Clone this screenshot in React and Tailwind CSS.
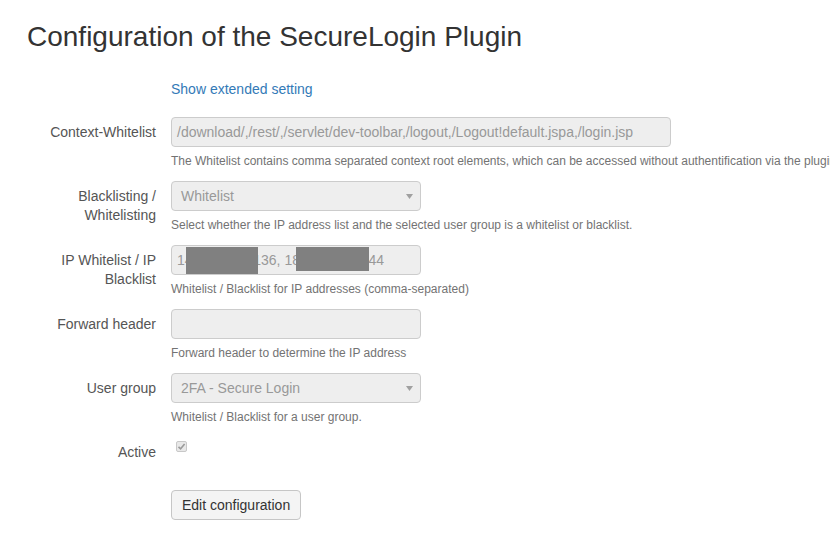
import React from "react";

const font = { fontFamily: '"Liberation Sans", Arial, sans-serif' };

function Arrow() {
  return (
    <svg width="7" height="5" viewBox="0 0 7 5" className="shrink-0">
      <path d="M0 0 L7 0 L3.5 5 Z" fill="#a0a0a0" />
    </svg>
  );
}

function Row({ label, children, help }) {
  return (
    <div className="flex mb-[11px]">
      <div className="w-[156px] shrink-0 text-right pt-[6px] text-[14px] leading-[19px] text-[#555]">
        {label}
      </div>
      <div className="ml-[15px] flex flex-col">
        {children}
        {help && (
          <div className="mt-[6px] text-[12px] leading-[17px] text-[#737373] whitespace-nowrap">
            {help}
          </div>
        )}
      </div>
    </div>
  );
}

function TextBox({ width, children }) {
  return (
    <div
      className={`relative h-[30px] ${width} bg-[#eeeeee] border border-[#cccccc] rounded-[4px] pl-[5px] flex items-center text-[14px] text-[#999999] whitespace-nowrap overflow-hidden`}
    >
      {children}
    </div>
  );
}

function SelectBox({ children }) {
  return (
    <div className="h-[30px] w-[250px] bg-[#eeeeee] border border-[#cccccc] rounded-[4px] pl-[9px] pr-[7px] flex items-center justify-between text-[14px] text-[#999999] whitespace-nowrap">
      <span>{children}</span>
      <Arrow />
    </div>
  );
}

export default function App() {
  return (
    <div className="w-[830px] h-[559px] overflow-hidden bg-white text-[#333]" style={font}>
      <h1 className="ml-[27px] pt-[20px] text-[28px] leading-[33px] text-[#333] font-normal whitespace-nowrap">
        Configuration of the SecureLogin Plugin
      </h1>
      <div className="ml-[171px] mt-[26px] text-[14px] leading-[20px] text-[#337ab7]">
        Show extended setting
      </div>
      <div className="mt-[18px]">
        <Row
          label="Context-Whitelist"
          help="The Whitelist contains comma separated context root elements, which can be accessed without authentification via the plugin."
        >
          <TextBox width="w-[500px]">
            /download/,/rest/,/servlet/dev-toolbar,/logout,/Logout!default.jspa,/login.jsp
          </TextBox>
        </Row>
        <Row
          label={<>Blacklisting /<br />Whitelisting</>}
          help="Select whether the IP address list and the selected user group is a whitelist or blacklist."
        >
          <SelectBox>Whitelist</SelectBox>
        </Row>
        <Row
          label={<>IP Whitelist / IP<br />Blacklist</>}
          help="Whitelist / Blacklist for IP addresses (comma-separated)"
        >
          <TextBox width="w-[250px]">
            14x.xxx.xxx.136, 18x.xxx.xxx.144
            <div className="absolute left-[14px] top-[1px] w-[72px] h-[27px] bg-[#808080]" />
            <div className="absolute left-[124px] top-[1px] w-[73px] h-[24px] bg-[#808080]" />
          </TextBox>
        </Row>
        <Row label="Forward header" help="Forward header to determine the IP address">
          <div className="h-[30px] w-[250px] bg-[#eeeeee] border border-[#cccccc] rounded-[4px]" />
        </Row>
        <Row label="User group" help="Whitelist / Blacklist for a user group.">
          <SelectBox>2FA - Secure Login</SelectBox>
        </Row>
        <div className="flex h-[53px]">
          <div className="w-[156px] shrink-0 text-right pt-[5px] text-[14px] leading-[20px] text-[#555]">
            Active
          </div>
          <div className="ml-[20px] mt-[4px]">
            <div className="w-[11px] h-[11px] border border-[#c8c8c8] bg-[#e8e8e8] rounded-[2px] flex items-center justify-center">
              <svg width="9" height="9" viewBox="0 0 9 9">
                <path d="M1.5 4.8 L3.6 6.8 L7.6 2" fill="none" stroke="#9a9a9a" strokeWidth="1.6" />
              </svg>
            </div>
          </div>
        </div>
        <div className="ml-[171px]">
          <div className="inline-flex items-center h-[30px] px-[10px] bg-[#f4f4f4] border border-[#c6c6c6] rounded-[4px] text-[14px] text-[#333]">
            Edit configuration
          </div>
        </div>
      </div>
    </div>
  );
}
